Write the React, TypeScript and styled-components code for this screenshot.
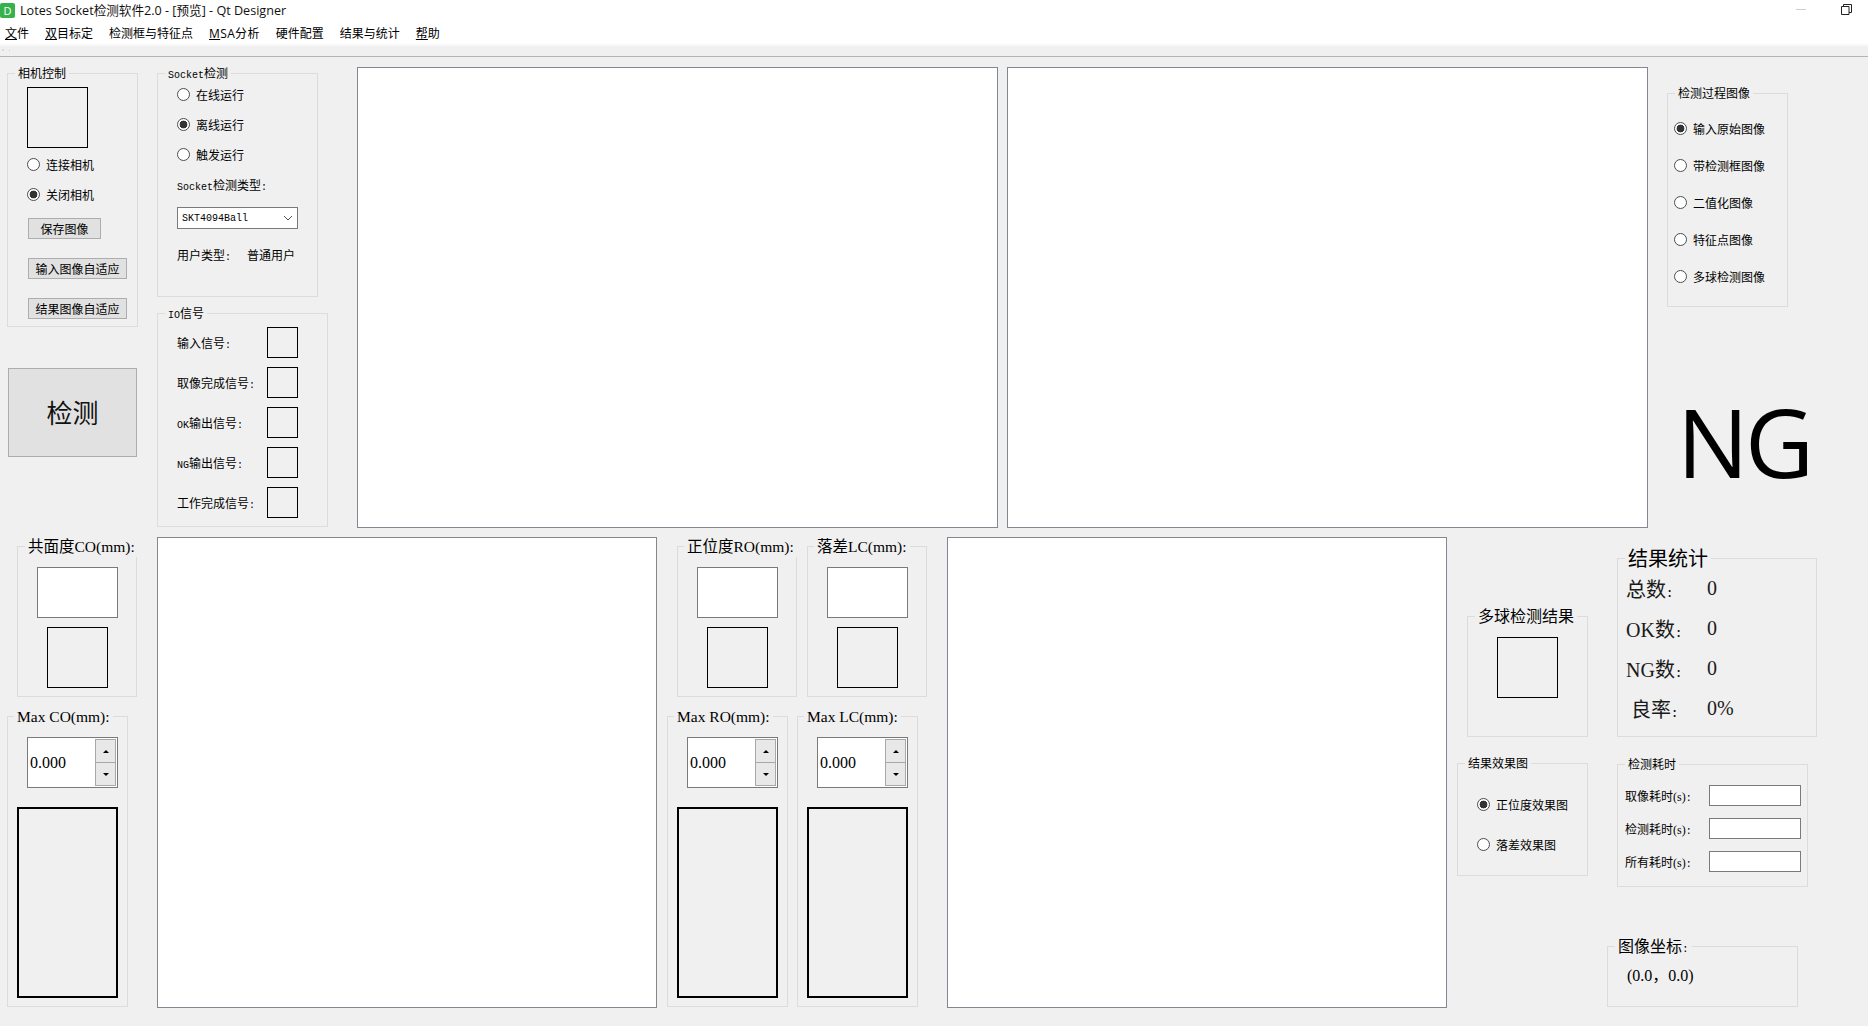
import React, { ReactNode } from 'react'
import styled, { createGlobalStyle } from 'styled-components'

const CJK = '"Noto Sans CJK SC", sans-serif'
const SERIF = `"Liberation Serif", ${CJK}`
const UI = `"Open Sans", ${CJK}`

const GlobalStyle = createGlobalStyle`
  html, body {
    margin: 0;
    padding: 0;
    background: #f0f0f0;
    overflow: hidden;
  }
  * {
    box-sizing: border-box;
  }
`

const Window = styled.div`
  width: 1868px;
  height: 1026px;
  display: flex;
  flex-direction: column;
  background: #f0f0f0;
  color: #000;
  font-family: ${CJK};
  font-size: 12px;
  overflow: hidden;
`

/* window chrome */
const TitleBar = styled.div`
  height: 22px;
  padding-bottom: 3px;
  background: #fff;
  display: flex;
  align-items: center;
`
const AppIcon = styled.div`
  width: 15px;
  height: 15px;
  margin-top: 2px;
  background: #35b34a;
  border-radius: 2px;
  color: #fff;
  font: 11px ${UI};
  line-height: 15px;
  text-align: center;
`
const TitleText = styled.span`
  margin-left: 5px;
  font: 12.6px ${UI};
  color: #111;
`
const WindowButtons = styled.div`
  margin-left: auto;
  width: 72px;
  height: 22px;
  margin-top: 3px;
  display: flex;
  align-items: flex-start;
  gap: 35px;
  padding-top: 4px;
`
const MenuBar = styled.div`
  height: 22px;
  background: #fff;
  display: flex;
  align-items: center;
  gap: 16px;
  padding-left: 5px;
  font: 12px ${UI};
`
const WideMenuItem = styled.span`
  letter-spacing: 0.35px;
`
const ToolBar = styled.div`
  height: 13px;
  padding: 3px 0 0 2px;
  background: #f0f0f0;
  border-top: 2px solid #f8f8f8;
  border-bottom: 1px solid #b4b4b4;
  display: flex;
  align-items: flex-start;
`

/* page layout */
const TopRow = styled.div`
  height: 473px;
  display: flex;
  padding-left: 7px;
`
const BottomRow = styled.div`
  flex: 1;
  display: flex;
  padding-left: 7px;
`
const Column = styled.div<{ $w: number; $ml?: number; $mt?: number }>`
  width: ${({ $w }) => $w}px;
  margin-left: ${({ $ml }) => $ml ?? 0}px;
  padding-top: ${({ $mt }) => $mt ?? 0}px;
  flex: none;
  display: flex;
  flex-direction: column;
  align-items: flex-start;
`

/* group box */
const GroupFrame = styled.div<{
  $w: number
  $h: number
  $mt?: number
  $ml?: number
  $pt?: number
  $pl?: number
  $gap?: number
}>`
  position: relative;
  flex: none;
  width: ${({ $w }) => $w}px;
  height: ${({ $h }) => $h}px;
  margin-top: ${({ $mt }) => $mt ?? 0}px;
  margin-left: ${({ $ml }) => $ml ?? 0}px;
  padding-top: ${({ $pt }) => $pt ?? 0}px;
  padding-left: ${({ $pl }) => $pl ?? 0}px;
  border: 1px solid #dcdcdc;
  display: flex;
  flex-direction: column;
  align-items: flex-start;
  gap: ${({ $gap }) => $gap ?? 0}px;
`
const GroupTitle = styled.div<{ $size?: number; $left?: number }>`
  position: absolute;
  top: -10px;
  left: ${({ $left }) => $left ?? 7}px;
  height: 20px;
  padding: 0 3px;
  background: #f0f0f0;
  white-space: nowrap;
  font-family: ${SERIF};
  font-size: ${({ $size }) => $size ?? 12}px;
  line-height: 20px;
`
const Ascii = styled.span<{ $size?: number; $bold?: boolean }>`
  font-family: "Liberation Mono", monospace;
  font-size: ${({ $size }) => $size ?? 10}px;
  font-weight: ${({ $bold }) => ($bold ? 700 : 400)};
`

/* small parts */
const Lamp = styled.div<{ $size?: number; $mt?: number; $mb?: number; $ml?: number }>`
  flex: none;
  width: ${({ $size }) => $size ?? 61}px;
  height: ${({ $size }) => $size ?? 61}px;
  margin-top: ${({ $mt }) => $mt ?? 0}px;
  margin-bottom: ${({ $mb }) => $mb ?? 0}px;
  margin-left: ${({ $ml }) => $ml ?? 0}px;
  border: 1px solid #000;
`
const Field = styled.div<{ $w: number; $h: number; $mt?: number }>`
  flex: none;
  width: ${({ $w }) => $w}px;
  height: ${({ $h }) => $h}px;
  margin-top: ${({ $mt }) => $mt ?? 0}px;
  background: #fff;
  border: 1px solid #7a7a7a;
`
const RadioRow = styled.div<{ $h: number }>`
  height: ${({ $h }) => $h}px;
  display: flex;
  align-items: center;
  gap: 6px;
  white-space: nowrap;
`
const RadioDot = styled.span<{ $on?: boolean }>`
  flex: none;
  width: 13px;
  height: 13px;
  border: 1px solid #4d4d4d;
  border-radius: 50%;
  background: ${({ $on }) => ($on ? 'radial-gradient(circle, #333 0 3.6px, #fff 4.2px)' : '#fff')};
`
const PushButton = styled.div<{ $w: number; $mt: number }>`
  width: ${({ $w }) => $w}px;
  height: 21px;
  margin-top: ${({ $mt }) => $mt}px;
  margin-left: 1px;
  background: #e1e1e1;
  border: 1px solid #adadad;
  display: flex;
  align-items: center;
  justify-content: center;
  white-space: nowrap;
`
const DetectButton = styled.div`
  width: 129px;
  height: 89px;
  margin-top: 41px;
  margin-left: 1px;
  padding-bottom: 2px;
  background: #e1e1e1;
  border: 1px solid #adadad;
  display: flex;
  align-items: center;
  justify-content: center;
  font-size: 26px;
  color: #111;
`
const Preview = styled.div<{ $w: number; $h: number; $mt: number; $ml: number }>`
  flex: none;
  width: ${({ $w }) => $w}px;
  height: ${({ $h }) => $h}px;
  margin-top: ${({ $mt }) => $mt}px;
  margin-left: ${({ $ml }) => $ml}px;
  background: #fff;
  border: 1px solid #828790;
`
const PlainLine = styled.div<{ $mt: number }>`
  height: 16px;
  margin-top: ${({ $mt }) => $mt}px;
  line-height: 16px;
  white-space: nowrap;
`
const Combo = styled.div`
  width: 121px;
  height: 22px;
  margin-top: 14px;
  padding: 0 4px;
  background: #fff;
  border: 1px solid #7a7a7a;
  display: flex;
  align-items: center;
  justify-content: space-between;
`
const UserRow = styled.div`
  display: flex;
  margin-top: 18px;
  line-height: 16px;
`
const UserName = styled.span`
  margin-left: 16px;
`
const SignalRow = styled.div`
  width: 121px;
  height: 31px;
  display: flex;
  align-items: center;
  justify-content: space-between;
  white-space: nowrap;
`

/* spin box */
const SpinBox = styled.div`
  flex: none;
  width: 91px;
  height: 51px;
  padding: 1px 1px 1px 2px;
  background: #fff;
  border: 1px solid #7a7a7a;
  display: flex;
  align-items: center;
  justify-content: space-between;
  font-family: ${SERIF};
  font-size: 16px;
`
const SpinButtons = styled.div`
  width: 21px;
  height: 47px;
  display: flex;
  flex-direction: column;
  border: 1px solid #a8a8a8;
`
const SpinArrow = styled.div<{ $down?: boolean }>`
  flex: 1;
  background: #e8e8e8;
  display: flex;
  align-items: center;
  justify-content: center;
  border-top: ${({ $down }) => ($down ? '1px solid #a8a8a8' : 'none')};
  &::after {
    content: '';
    border-left: 3px solid transparent;
    border-right: 3px solid transparent;
    ${({ $down }) => ($down ? 'border-top: 3px solid #000;' : 'border-bottom: 3px solid #000;')}
  }
`
const Gauge = styled.div`
  flex: none;
  width: 101px;
  height: 191px;
  margin-top: 19px;
  margin-left: -10px;
  border: 2px solid #000;
`

/* right side */
const BigResult = styled.div`
  margin-top: 84px;
  margin-left: 10px;
  font-family: "Open Sans", sans-serif;
  font-size: 95px;
  line-height: 100px;
  letter-spacing: -3.5px;
  white-space: nowrap;
`
const RightPair = styled.div`
  display: flex;
  align-items: flex-start;
`
const StatRow = styled.div<{ $h: number }>`
  height: ${({ $h }) => $h}px;
  display: flex;
  align-items: center;
  font-family: ${SERIF};
  font-size: 20px;
  color: #1a1a1a;
`
const StatLabel = styled.span<{ $pl?: number }>`
  width: 81px;
  padding-left: ${({ $pl }) => $pl ?? 0}px;
  white-space: nowrap;
`
const TimeRow = styled.div`
  width: 176px;
  height: 33px;
  display: flex;
  align-items: center;
  justify-content: space-between;
  font-family: ${SERIF};
  white-space: nowrap;
`
const CoordText = styled.div`
  margin-top: 20px;
  margin-left: 19px;
  font-family: ${SERIF};
  font-size: 16px;
  line-height: 18px;
  white-space: nowrap;
`

type GroupProps = {
  title: ReactNode
  size?: number
  left?: number
  children?: ReactNode
} & React.ComponentProps<typeof GroupFrame>

const Group = ({ title, size, left, children, ...rest }: GroupProps) => (
  <GroupFrame {...rest}>
    <GroupTitle $size={size} $left={left}>{title}</GroupTitle>
    {children}
  </GroupFrame>
)

const Radio = ({ label, on, h }: { label: ReactNode; on?: boolean; h: number }) => (
  <RadioRow $h={h}>
    <RadioDot $on={on} />
    <span>{label}</span>
  </RadioRow>
)

const Spin = () => (
  <SpinBox>
    0.000
    <SpinButtons>
      <SpinArrow />
      <SpinArrow $down />
    </SpinButtons>
  </SpinBox>
)

const ValueGroup = ({ title, ml, left }: { title: string; ml: number; left?: number }) => (
  <Group title={title} size={15.5} left={left} $w={120} $h={151} $mt={16} $ml={ml} $pt={20} $pl={19}>
    <Field $w={81} $h={51} />
    <Lamp $mt={9} $ml={10} />
  </Group>
)

const MaxGroup = ({ title, ml }: { title: string; ml: number }) => (
  <Group title={title} size={15.5} left={6} $w={121} $h={291} $mt={19} $ml={ml} $pt={20} $pl={19}>
    <Spin />
    <Gauge />
  </Group>
)

const signals: ReactNode[] = [
  <>输入信号<Ascii>:</Ascii></>,
  <>取像完成信号<Ascii>:</Ascii></>,
  <><Ascii>OK</Ascii>输出信号<Ascii>:</Ascii></>,
  <><Ascii>NG</Ascii>输出信号<Ascii>:</Ascii></>,
  <>工作完成信号<Ascii>:</Ascii></>,
]

const timings = ['取像耗时(s)', '检测耗时(s)', '所有耗时(s)']

const StatColon = () => <Ascii $size={12} $bold>:</Ascii>

export default function App() {
  return (
    <Window>
      <GlobalStyle />
      <TitleBar>
        <AppIcon>D</AppIcon>
        <TitleText>Lotes Socket检测软件2.0 - [预览] - Qt Designer</TitleText>
        <WindowButtons>
          <svg width="10" height="11" viewBox="0 0 10 11">
            <path d="M0 5.5h10" stroke="#cfcfcf" fill="none" />
          </svg>
          <svg width="11" height="11" viewBox="0 0 11 11" fill="none" stroke="#222">
            <path d="M.5 2.5h7.5v8H.5z" />
            <path d="M2.5 2.5V.5h8v8H8" />
          </svg>
        </WindowButtons>
      </TitleBar>
      <MenuBar>
        <span><u>文</u>件</span>
        <span><u>双</u>目标定</span>
        <span>检测框与特征点</span>
        <WideMenuItem><u>M</u>SA分析</WideMenuItem>
        <span>硬件配置</span>
        <span>结果与统计</span>
        <span><u>帮</u>助</span>
      </MenuBar>
      <ToolBar>
        <svg width="8" height="3" viewBox="0 0 8 3" fill="#c8c8c8">
          <path d="M0 1h1v1H0zM1 0h1v1H1zM7 1h1v1H7z" />
        </svg>
      </ToolBar>

      <TopRow>
        <Column $w={131} $mt={16}>
          <Group title="相机控制" $w={131} $h={254} $pt={13} $pl={19}>
            <Lamp $mb={1} />
            <Radio h={30} label="连接相机" />
            <Radio h={30} label="关闭相机" on />
            <PushButton $w={73} $mt={9}>保存图像</PushButton>
            <PushButton $w={99} $mt={19}>输入图像自适应</PushButton>
            <PushButton $w={99} $mt={19}>结果图像自适应</PushButton>
          </Group>
          <DetectButton>检测</DetectButton>
        </Column>

        <Column $w={171} $ml={19} $mt={16}>
          <Group title={<><Ascii>Socket</Ascii>检测</>} $w={161} $h={224} $pt={5} $pl={19}>
            <Radio h={30} label="在线运行" />
            <Radio h={30} label="离线运行" on />
            <Radio h={30} label="触发运行" />
            <PlainLine $mt={8}><Ascii>Socket</Ascii>检测类型<Ascii>:</Ascii></PlainLine>
            <Combo>
              <Ascii>SKT4094Ball</Ascii>
              <svg width="10" height="6" viewBox="0 0 10 6" fill="none" stroke="#555">
                <path d="M1 1l4 4 4-4" />
              </svg>
            </Combo>
            <UserRow>
              <span>用户类型<Ascii>:</Ascii></span>
              <UserName>普通用户</UserName>
            </UserRow>
          </Group>
          <Group title={<><Ascii>IO</Ascii>信号</>} $w={171} $h={214} $mt={16} $pt={13} $pl={19} $gap={9}>
            {signals.map((label, i) => (
              <SignalRow key={i}>
                <span>{label}</span>
                <Lamp $size={31} />
              </SignalRow>
            ))}
          </Group>
        </Column>

        <Preview $w={641} $h={461} $mt={10} $ml={29} />
        <Preview $w={641} $h={461} $mt={10} $ml={9} />

        <Column $w={190} $ml={19} $mt={36}>
          <Group title="检测过程图像" $w={121} $h={214} $pt={16} $pl={6}>
            <Radio h={37} label="输入原始图像" on />
            <Radio h={37} label="带检测框图像" />
            <Radio h={37} label="二值化图像" />
            <Radio h={37} label="特征点图像" />
            <Radio h={37} label="多球检测图像" />
          </Group>
          <BigResult>NG</BigResult>
        </Column>
      </TopRow>

      <BottomRow>
        <Column $w={130}>
          <ValueGroup title="共面度CO(mm):" ml={10} />
          <MaxGroup title="Max CO(mm):" ml={0} />
        </Column>
        <Preview $w={500} $h={471} $mt={7} $ml={20} />
        <Column $w={280} $ml={10}>
          <RightPair>
            <ValueGroup title="正位度RO(mm):" ml={10} left={6} />
            <ValueGroup title="落差LC(mm):" ml={10} left={6} />
          </RightPair>
          <RightPair>
            <MaxGroup title="Max RO(mm):" ml={0} />
            <MaxGroup title="Max LC(mm):" ml={9} />
          </RightPair>
        </Column>
        <Preview $w={500} $h={471} $mt={7} $ml={0} />

        <Column $w={131} $ml={10}>
          <Group title="多球检测结果" size={16} $w={121} $h={121} $mt={86} $ml={10} $pt={20} $pl={29}>
            <Lamp />
          </Group>
          <Group title="结果效果图" $w={131} $h={113} $mt={26} $pt={20} $pl={19}>
            <Radio h={40} label="正位度效果图" on />
            <Radio h={40} label="落差效果图" />
          </Group>
        </Column>

        <Column $w={201} $ml={29}>
          <Group title="结果统计" size={20} $w={200} $h={179} $mt={28} $pt={9} $pl={8}>
            <StatRow $h={40}><StatLabel>总数<StatColon /></StatLabel>0</StatRow>
            <StatRow $h={40}><StatLabel>OK数<StatColon /></StatLabel>0</StatRow>
            <StatRow $h={40}><StatLabel>NG数<StatColon /></StatLabel>0</StatRow>
            <StatRow $h={40}><StatLabel $pl={5}>良率<StatColon /></StatLabel>0%</StatRow>
          </Group>
          <Group title="检测耗时" $w={191} $h={123} $mt={27} $pt={14} $pl={7}>
            {timings.map((label) => (
              <TimeRow key={label}>
                <span>{label}<Ascii>:</Ascii></span>
                <Field $w={92} $h={21} />
              </TimeRow>
            ))}
          </Group>
          <Group title={<>图像坐标<Ascii $size={11}>:</Ascii></>} size={16} $w={191} $h={61} $mt={59} $ml={-10}>
            <CoordText>(0.0，0.0)</CoordText>
          </Group>
        </Column>
      </BottomRow>
    </Window>
  )
}
